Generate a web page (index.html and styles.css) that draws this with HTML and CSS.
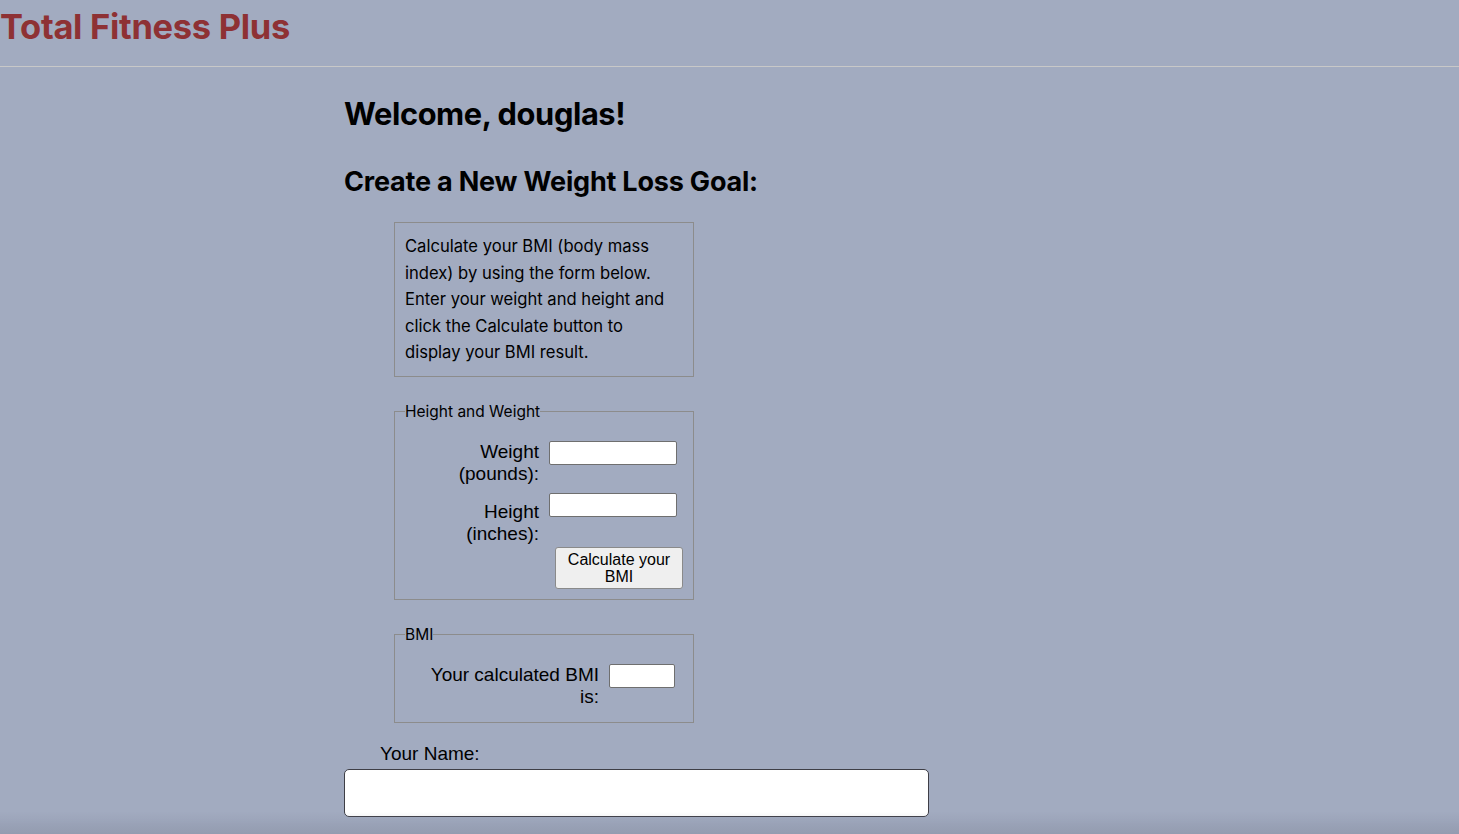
FILE: index.html
```html
<!DOCTYPE html>
<html>
<head>
<meta charset="utf-8">
<link rel="stylesheet" href="styles.css">
</head>
<body>
<header class="site-header">
  <h1 class="brand">Total Fitness Plus</h1>
</header>
<main class="main">
  <h2 class="welcome">Welcome, douglas!</h2>
  <h3 class="subtitle">Create a New Weight Loss Goal:</h3>
  <div class="info-box">
    Calculate your BMI (body mass index) by using the form below. Enter your weight and height and click the Calculate button to display your BMI result.
  </div>
  <fieldset class="fs fs-hw">
    <legend class="legend">Height and Weight</legend>
    <div class="grid-hw">
      <label class="lbl">Weight (pounds):</label>
      <input class="small-input" type="text">
      <label class="lbl lbl-low">Height (inches):</label>
      <input class="small-input" type="text">
      <span></span>
      <button class="calc-btn" type="button">Calculate your BMI</button>
    </div>
  </fieldset>
  <fieldset class="fs fs-bmi">
    <legend class="legend">BMI</legend>
    <div class="grid-bmi">
      <label class="lbl">Your calculated BMI is:</label>
      <input class="bmi-input" type="text">
    </div>
  </fieldset>
  <label class="name-label">Your Name:</label>
  <input class="name-input" type="text">
</main>
<div class="bottom-shade"></div>
</body>
</html>
```
FILE: styles.css
```css
html, body {
  margin: 0;
  padding: 0;
  background: #a2abc0;
  font-family: Inter, "Noto Sans", sans-serif;
  color: #000;
  height: 834px;
  overflow: hidden;
}
.site-header {
  height: 67px;
  border-bottom: 1px solid #c8c8c8;
  box-sizing: border-box;
}
.brand {
  margin: 0;
  padding-top: 4px;
  font-size: 34.5px;
  font-weight: 700;
  color: #8e3134;
  letter-spacing: -0.3px;
  line-height: 46px;
}
.main {
  margin-left: 344px;
  width: 585px;
  display: flex;
  flex-direction: column;
  align-items: flex-start;
}
.welcome {
  margin: 27px 0 0 0;
  font-size: 30.8px;
  line-height: 40px;
  font-weight: 700;
  letter-spacing: -0.4px;
}
.subtitle {
  margin: 33px 0 0 0;
  font-size: 27px;
  line-height: 30px;
  font-weight: 700;
  letter-spacing: -0.2px;
}
.info-box {
  margin: 25px 0 0 50px;
  width: 300px;
  box-sizing: border-box;
  border: 1px solid #8c8c8c;
  padding: 10px 24px 10px 10px;
  font-size: 16.6px;
  line-height: 26.5px;
}
.fs {
  margin: 26px 0 0 50px;
  width: 300px;
  box-sizing: border-box;
  border: 1px solid #8c8c8c;
  padding: 10px 10px 10px 10px;
  min-width: 0;
}
.legend {
  padding: 0;
  font-size: 15.5px;
  line-height: 18px;
}
.grid-hw {
  display: grid;
  grid-template-columns: 134px 128px;
  column-gap: 10px;
  row-gap: 8px;
  padding-top: 10px;
}
.grid-hw > .lbl {
  padding-left: 8px;
}
.grid-hw > .lbl-low {
  margin: 8px 0 -8px 0;
}
.lbl {
  text-align: right;
  font-family: "Liberation Sans", Arial, sans-serif;
  font-size: 19px;
  line-height: 22px;
}
.small-input {
  width: 128px;
  height: 24px;
  box-sizing: border-box;
  border: 1px solid #6f6f6f;
  border-radius: 2px;
  background: #fff;
  margin: 0;
}
.calc-btn {
  justify-self: end;
  width: 128px;
  height: 42px;
  margin: 2px -6px 0 0;
  box-sizing: border-box;
  border: 1px solid #8a8a8a;
  border-radius: 3px;
  background: #efefef;
  font-family: "Liberation Sans", Arial, sans-serif;
  font-size: 16px;
  line-height: 17px;
  padding: 2px 6px;
  color: #000;
}
.fs-hw {
  padding-bottom: 10px;
}
.fs-bmi {
  margin-top: 26px;
  padding-bottom: 14px;
}
.grid-bmi {
  display: grid;
  grid-template-columns: 185px 66px;
  column-gap: 10px;
  padding-top: 10px;
  padding-left: 9px;
}
.bmi-input {
  width: 66px;
  height: 24px;
  box-sizing: border-box;
  border: 1px solid #6f6f6f;
  border-radius: 2px;
  background: #fff;
  margin: 0;
}
.name-label {
  margin: 20px 0 0 36px;
  font-family: "Liberation Sans", Arial, sans-serif;
  font-size: 19px;
  line-height: 22px;
}
.name-input {
  margin: 4px 0 0 0;
  width: 585px;
  height: 48px;
  box-sizing: border-box;
  border: 1px solid #3e3e46;
  border-radius: 5px;
  background: #fff;
}
.bottom-shade {
  position: fixed;
  left: 0;
  right: 0;
  bottom: 0;
  height: 22px;
  background: linear-gradient(to bottom, rgba(120,128,148,0), rgba(120,128,148,0.35));
  pointer-events: none;
}
```
